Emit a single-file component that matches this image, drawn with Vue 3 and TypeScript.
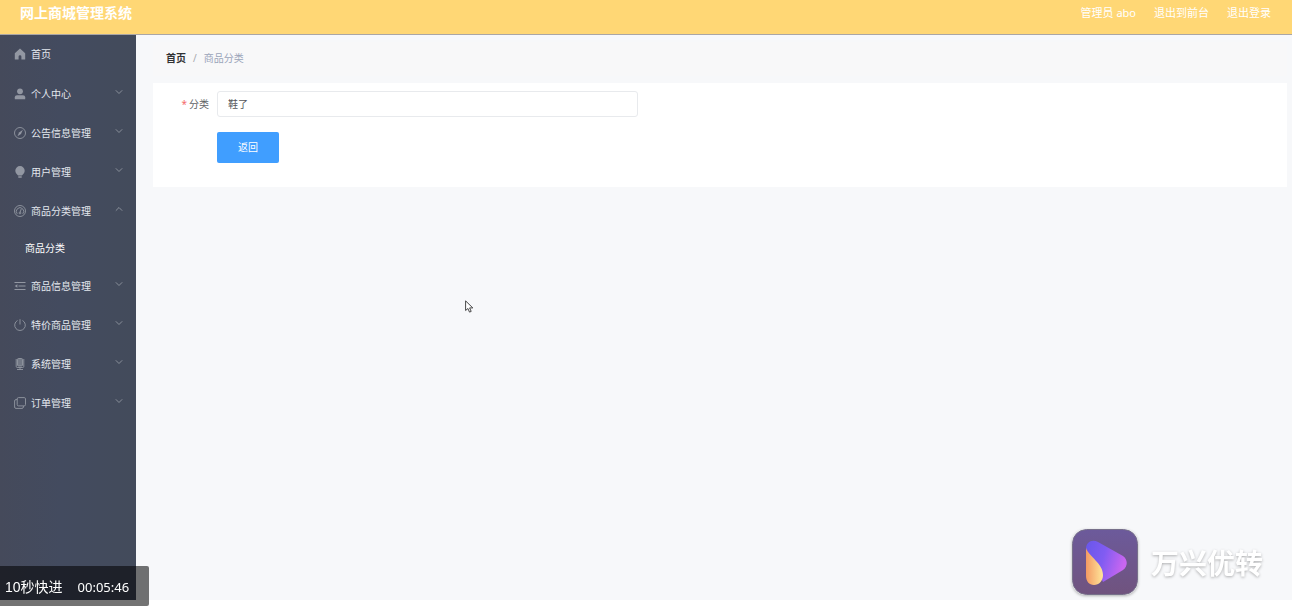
<script setup lang="ts">
import { ref } from 'vue'

interface MenuItem {
  label: string
  icon: string
  children?: string[]
}

const menu: MenuItem[] = [
  { label: '个人中心', icon: 'user' },
  { label: '公告信息管理', icon: 'compass' },
  { label: '用户管理', icon: 'bulb' },
  { label: '商品分类管理', icon: 'gauge', children: ['商品分类'] },
  { label: '商品信息管理', icon: 'list' },
  { label: '特价商品管理', icon: 'power' },
  { label: '系统管理', icon: 'mic' },
  { label: '订单管理', icon: 'copy' },
]

const opened = ref('商品分类管理')
const category = ref('鞋了')

function toggle(label: string) {
  opened.value = opened.value === label ? '' : label
}
</script>

<template>
  <div class="page">
    <header class="topbar">
      <h1 class="title">网上商城管理系统</h1>
      <nav class="account">
        <span>管理员 abo</span>
        <a href="#front">退出到前台</a>
        <a href="#logout">退出登录</a>
      </nav>
    </header>

    <div class="body">
      <nav class="sidebar">
        <a class="row home" href="#home">
          <svg class="icon" viewBox="0 0 12 12"><path class="solid" d="M6 .6 11.200 5.300V11.400H7.400V8.600a1.400 1.400 0 0 0-2.800 0v2.800H.8V5.300z" /></svg>
          <span>首页</span>
        </a>
        <template v-for="item in menu" :key="item.label">
          <button class="row" type="button" :aria-expanded="opened === item.label" @click="toggle(item.label)">
            <svg class="icon" viewBox="0 0 12 12">
              <template v-if="item.icon === 'user'">
                <circle class="solid" cx="6" cy="3.3" r="2.9" />
                <path class="solid" d="M.8 11.300V9.300C.8 8 1.800 7.200 3 7.200h6c1.200 0 2.200.8 2.200 2.100v2z" />
              </template>
              <template v-else-if="item.icon === 'compass'">
                <circle cx="6" cy="6" r="5.5" />
                <path class="solid" d="M8.900 2.700 7 7 3.500 9.200 5.100 5.500z" />
              </template>
              <template v-else-if="item.icon === 'bulb'">
                <path class="solid" d="M6 0a4.700 4.700 0 0 0-4.700 4.700C1.300 7 3 8.200 4 9.600h4C9 8.200 10.700 7 10.700 4.700A4.700 4.700 0 0 0 6 0zM4.300 10.300h3.400v1.400H4.300z" />
              </template>
              <template v-else-if="item.icon === 'gauge'">
                <circle cx="6" cy="6" r="5.5" />
                <path d="M3.200 8.800A3.700 3.700 0 1 1 8.800 8.800M7.200 4 6.200 7" />
                <circle cx="6" cy="8" r=".9" />
              </template>
              <template v-else-if="item.icon === 'list'">
                <path class="bold" d="M.5 2.500h11M4.500 6h7M.5 9.500h11" />
                <path class="solid" d="M3.400 4.200v3.600L.7 6z" />
              </template>
              <template v-else-if="item.icon === 'power'">
                <path d="M3.500 1.500a5.300 5.300 0 1 0 5 0M6 .2v5.300" />
              </template>
              <template v-else-if="item.icon === 'mic'">
                <rect class="soft" x="3.500" y=".5" width="5" height="7.500" rx="1" />
                <path d="M2.200 1v7.500c0 .6.400 1 1 1h5.600c.6 0 1-.4 1-1V1M6 9.500v2M3 11.500h6" />
              </template>
              <template v-else>
                <rect x="3.200" y=".6" width="8.300" height="8.300" rx="1.300" />
                <path d="M3.200 2.600H2A1.400 1.400 0 0 0 .6 4v6A1.400 1.400 0 0 0 2 11.400h6A1.400 1.400 0 0 0 9.400 10V9" />
              </template>
            </svg>
            <span>{{ item.label }}</span>
            <svg class="arrow" :class="{ up: opened === item.label }" viewBox="0 0 8 8"><path d="M.8 2.300 4 5.500 7.200 2.300" /></svg>
          </button>
          <template v-if="opened === item.label">
            <a v-for="child in item.children" :key="child" class="sub" href="#category">{{ child }}</a>
          </template>
        </template>
      </nav>

      <main class="main">
        <nav class="crumbs" aria-label="breadcrumb">
          <a href="#home">首页</a>
          <span class="slash">/</span>
          <span>商品分类</span>
        </nav>
        <form class="card" @submit.prevent>
          <div class="field">
            <label for="category"><span class="star">*</span> 分类</label>
            <input id="category" v-model="category" type="text" readonly />
          </div>
          <button class="back" type="button">返回</button>
        </form>
      </main>
    </div>

    <div class="timer"><span>10秒快进</span><time>00:05:46</time></div>

    <div class="brand">
      <svg class="brand-logo" viewBox="0 0 66 66">
        <defs>
          <linearGradient id="tile" x1="0" y1="0" x2="0" y2="1">
            <stop offset="0" stop-color="#6c5a9b" />
            <stop offset="1" stop-color="#70537e" />
          </linearGradient>
          <linearGradient id="play" x1="0" y1="0" x2="1" y2=".3">
            <stop offset="0" stop-color="#6857e9" />
            <stop offset=".5" stop-color="#815cf2" />
            <stop offset="1" stop-color="#c866f0" />
          </linearGradient>
          <linearGradient id="drop" x1="0" y1="0" x2="1" y2="0">
            <stop offset="0" stop-color="#f49a63" />
            <stop offset="1" stop-color="#ffe69a" />
          </linearGradient>
        </defs>
        <rect x=".5" y=".5" width="65" height="65" rx="14" fill="url(#tile)" stroke="#77708a" />
        <path d="M14 20C14 13 20 10 26 13L51 27C56 31 56 37 51 41L31 53z" fill="url(#play)" />
        <path d="M14 19C17 28 31 34 31 46C31 52 27 56 22 56C17 56 14 52 14 47z" fill="url(#drop)" />
      </svg>
      <span class="brand-name">万兴优转</span>
    </div>

    <svg class="pointer" viewBox="0 0 9 13" aria-hidden="true"><path d="M.6.900v9.600l2.300-2 1.600 3.600 1.700-.7-1.600-3.500h3.200z" /></svg>
  </div>
</template>

<style>
body {
  background: #fff;
}
</style>

<style scoped>
.page {
  display: flex;
  flex-direction: column;
  box-sizing: border-box;
  min-height: 100vh;
  padding-bottom: 6px;
  font-family: "Noto Sans", "Noto Sans CJK SC", sans-serif;
  font-size: 10px;
  line-height: 16px;
}
a {
  color: inherit;
  text-decoration: none;
}
button,
input {
  font: inherit;
}
.topbar {
  display: flex;
  justify-content: space-between;
  box-sizing: border-box;
  height: 35px;
  padding: 3px 21px 0 20px;
  background: #ffd775;
  border-bottom: 1px solid #aaa6a5;
  color: #fff;
}
.title {
  margin: 0;
  font-size: 14px;
  font-weight: 700;
  line-height: 20px;
}
.account {
  display: flex;
  gap: 18px;
  font-size: 11px;
  line-height: 20px;
}
.body {
  display: flex;
  flex: 1;
}
.sidebar {
  display: flex;
  flex-direction: column;
  flex: none;
  width: 136px;
  background: linear-gradient(90deg, #454a5b, #434b5f 45%, #434b5b);
  color: #e3e8ee;
}
.row {
  display: flex;
  align-items: center;
  box-sizing: border-box;
  height: 39px;
  padding: 0 13px 0 14px;
  border: 0;
  background: none;
  color: inherit;
  text-align: left;
  cursor: pointer;
}
.home {
  padding-bottom: 2px;
}
.icon {
  width: 12px;
  height: 12px;
  margin-right: 5px;
  fill: none;
  stroke: #9297a2;
  stroke-width: 0.9;
}
.icon .solid {
  fill: #9297a2;
  stroke: none;
}
.icon .bold {
  stroke-width: 1.2;
}
.icon .soft {
  fill: #737986;
}
.arrow {
  width: 8px;
  height: 8px;
  margin: 0 0 4px auto;
  fill: none;
  stroke: #9297a2;
  stroke-width: 0.9;
}
.arrow.up {
  transform: rotate(180deg);
}
.sub {
  padding: 0 25px;
  color: #fff;
  line-height: 36px;
}
.main {
  flex: 1;
  min-width: 0;
  padding: 7px 5px 0 17px;
  background: #f7f8fa;
}
.crumbs {
  display: flex;
  gap: 7px;
  padding: 8px 13px 10px;
  margin-bottom: 7px;
  background: #f8f8f9;
  color: #9aa4ba;
}
.crumbs a {
  color: #303133;
  font-weight: 700;
}
.slash {
  color: #a5a8ae;
}
.card {
  box-sizing: border-box;
  padding: 8px 30px 24px;
  background: #fff;
}
.field {
  display: flex;
  align-items: center;
  max-width: 455px;
  margin-bottom: 15px;
}
.field label {
  flex: none;
  width: 34px;
  box-sizing: border-box;
  padding-right: 8px;
  display: flex;
  justify-content: flex-end;
  gap: 2px;
  color: #606266;
  white-space: nowrap;
}
.star {
  color: #f56c6c;
}
.field input {
  flex: 1;
  min-width: 0;
  box-sizing: border-box;
  height: 26px;
  padding: 0 10px 1px;
  border: 1px solid #e8eaed;
  border-radius: 3px;
  background: #fff;
  color: #55575b;
  outline: none;
}
.back {
  display: block;
  width: 62px;
  height: 31px;
  margin-left: 34px;
  padding: 0 0 1px;
  border: 0;
  border-radius: 2px;
  background: #409eff;
  color: #fff;
  cursor: pointer;
}
.timer {
  position: fixed;
  left: 0;
  bottom: 0;
  display: flex;
  gap: 15px;
  box-sizing: border-box;
  width: 149px;
  height: 40px;
  padding: 2px 0 0 5px;
  border-radius: 0 2px 2px 0;
  background: rgba(0, 0, 0, 0.55);
  color: #fff;
  font-family: "Liberation Sans", "Noto Sans CJK SC", sans-serif;
  font-size: 14px;
  line-height: 38px;
}
.timer time {
  font-family: "Noto Sans", sans-serif;
  font-size: 13px;
}
.brand {
  position: fixed;
  right: 29px;
  bottom: 11px;
  display: flex;
  align-items: center;
  gap: 13px;
  color: #fff;
  font-size: 28px;
  font-weight: 700;
  line-height: 40px;
  text-shadow: 0 1px 3px rgba(0, 0, 0, 0.3);
}
.brand-name {
  padding-top: 2px;
}
.brand-logo {
  width: 66px;
  height: 66px;
  border-radius: 14px;
  box-shadow: 0 1px 3px rgba(0, 0, 0, 0.3);
}
.pointer {
  position: absolute;
  left: 465px;
  top: 300px;
  width: 9px;
  height: 13px;
  fill: #fff;
  stroke: #333;
  stroke-width: 0.9;
  pointer-events: none;
}
</style>
